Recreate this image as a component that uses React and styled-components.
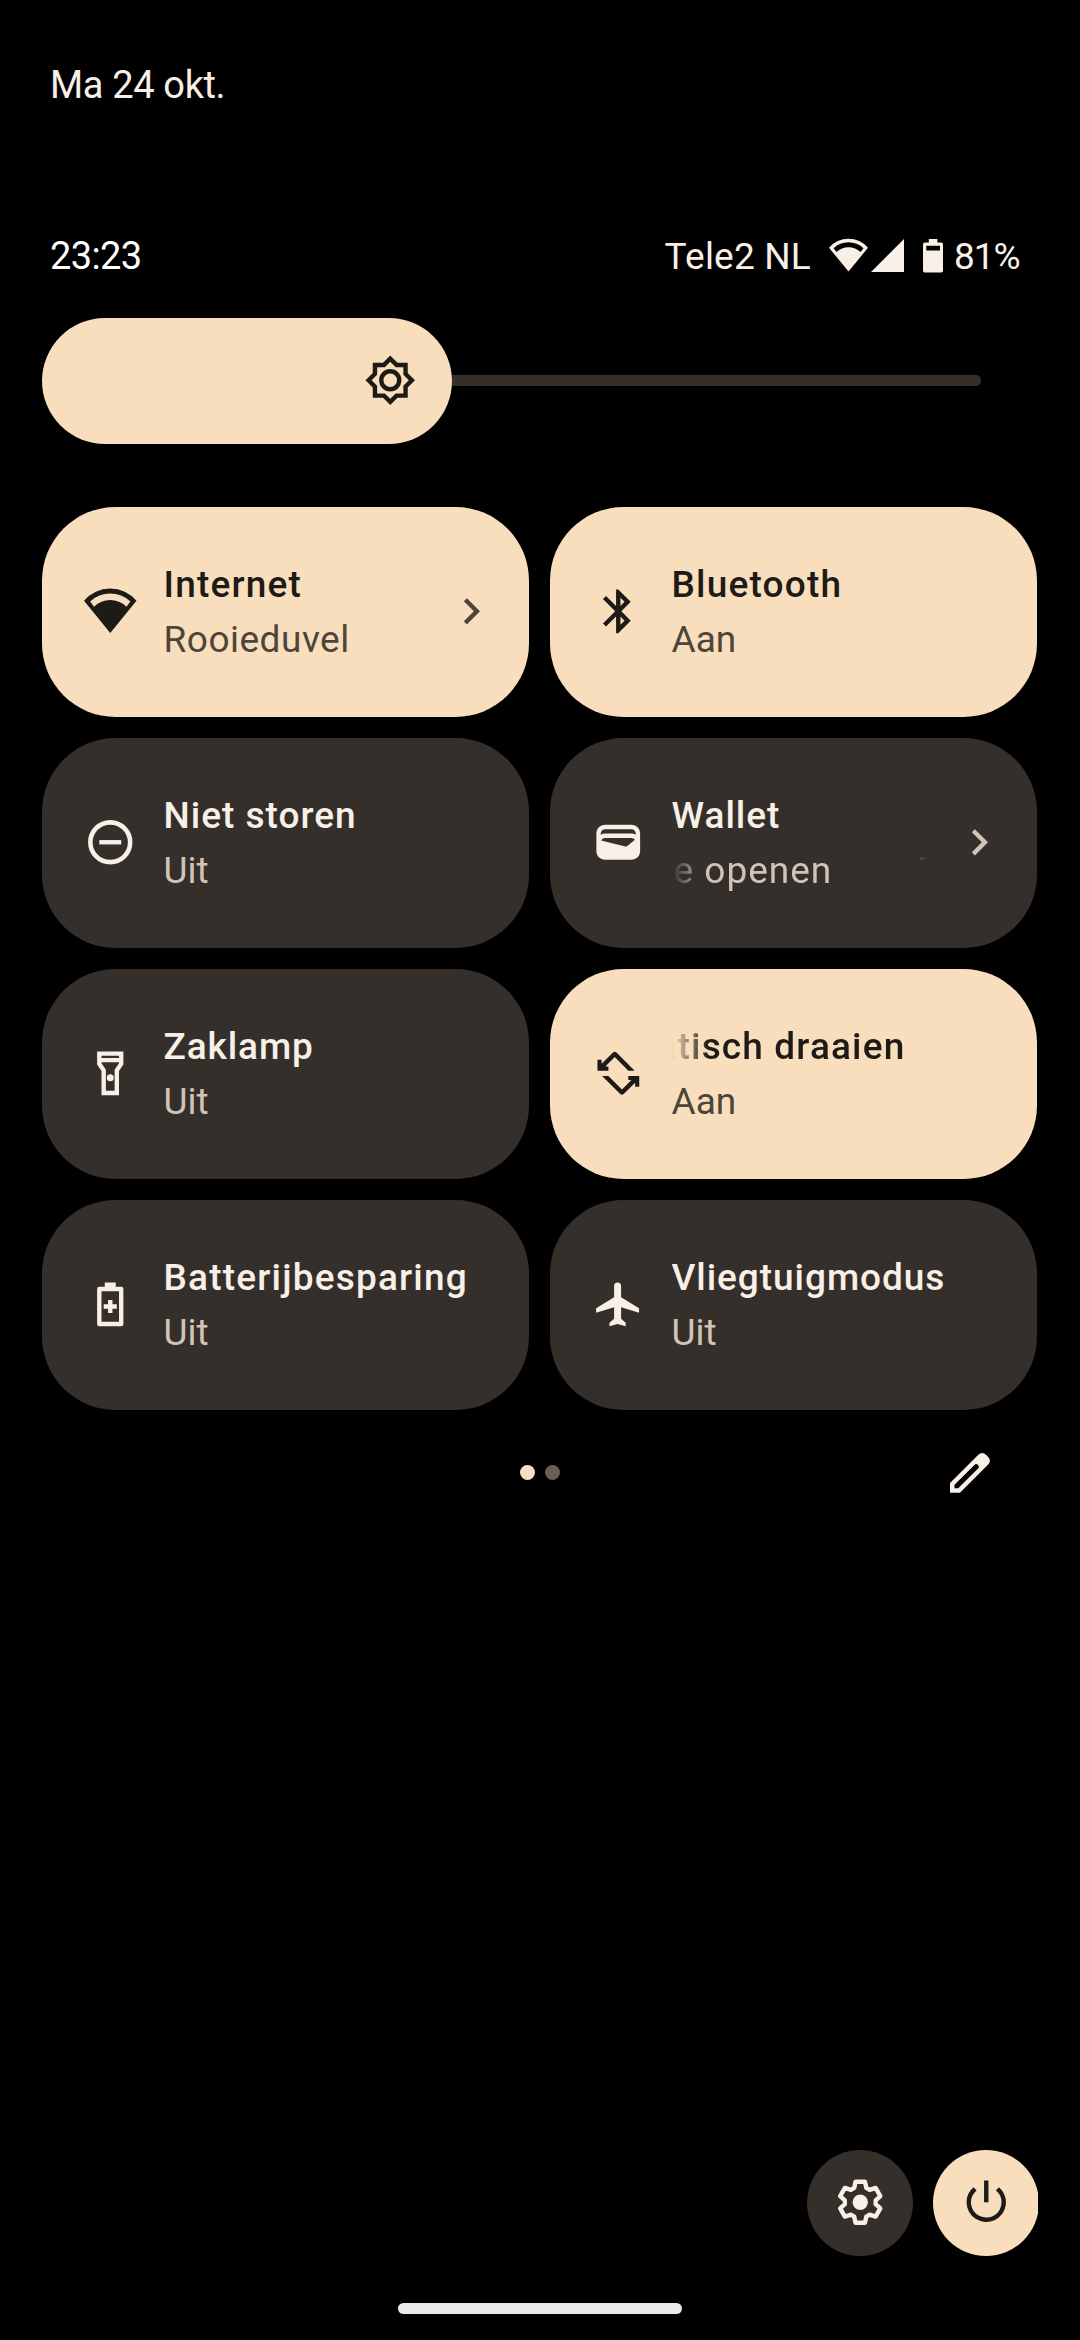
import React, { useState } from "react";
import styled, { createGlobalStyle } from "styled-components";

const ICONS = {
  wifi: (
    <path
      fillRule="evenodd"
      d="M0 7.2A15.7 15.7 0 0 1 24 7.2L12 21.9zM2.8 7.5L4.6 9.9A10.6 10.6 0 0 1 19.4 9.9L21.2 7.5A13.5 13.5 0 0 0 2.8 7.5z"
    />
  ),
  bluetooth: (
    <path d="M17.71 7.71L12 2h-1v7.59L6.41 5 5 6.41 10.59 12 5 17.59 6.41 19 11 14.41V22h1l5.71-5.71-4.3-4.29 4.3-4.29zM13 5.83l1.88 1.88L13 9.59V5.83zm1.88 10.46L13 18.17v-3.76l1.88 1.88z" />
  ),
  dnd: (
    <>
      <circle cx="12" cy="12" r="9.1" fill="none" stroke="currentColor" strokeWidth="2.1" />
      <rect x="7" y="11" width="10" height="2" />
    </>
  ),
  wallet: (
    <path
      fillRule="evenodd"
      d="M18 4H6C3.79 4 2 5.79 2 8v8c0 2.21 1.79 4 4 4h12c2.21 0 4-1.79 4-4V8c0-2.21-1.79-4-4-4zm-1.86 9.77c-.24.2-.57.28-.88.2L4.15 11.25C4.45 10.52 5.16 10 6 10h12c.67 0 1.26.34 1.63.84l-3.49 2.93zM6 6h12c1.1 0 2 .9 2 2v.55C19.41 8.21 18.73 8 18 8H6c-.73 0-1.41.21-2 .55V8c0-1.1.9-2 2-2z"
    />
  ),
  torch: (
    <>
      <path fillRule="evenodd" d="M6 2v6l2 3v11h8V11l2-3V2H6zm10 2v1H8V4h8zm-2 6.4V20h-4v-9.6L8 7.4V7h8v.4l-2 3z" />
      <circle cx="12" cy="14" r="1.6" />
    </>
  ),
  rotate: (
    <>
      <path d="M2.5 5.8h1.9v1.9L9.6 2.5q.8-.7 1.6 0L19.5 10.8h-2.9L10.4 4.6 6.1 8.9h1.4v1.9h-5z" />
      <path
        transform="rotate(180 12.05 12)"
        d="M2.5 5.8h1.9v1.9L9.6 2.5q.8-.7 1.6 0L19.5 10.8h-2.9L10.4 4.6 6.1 8.9h1.4v1.9h-5z"
      />
    </>
  ),
  saver: (
    <>
      <path
        fillRule="evenodd"
        d="M9.5 2h5v2H17q1 0 1 1v16q0 1-1 1H7q-1 0-1-1V5q0-1 1-1h2.5zM8 6v14h8V6z"
      />
      <path d="M11 10h2v2h2v2h-2v2h-2v-2H9v-2h2z" />
    </>
  ),
  plane: (
    <path d="M21.5 15.9v-2.1l-8.2-5V3.6a1.6 1.6 0 0 0-3.2 0v5.2l-8.2 5v2.1l8.2-2.5v5.2L8 20.5V22l3.7-1 3.7 1v-1.5l-2.1-1.9v-5.2z" />
  ),
  chevron: <path d="M8.59 16.59L13.17 12 8.59 7.41 10 6l6 6-6 6z" />,
  brightness: (
    <>
      <path
        fillRule="evenodd"
        d="M20 8.69V4h-4.69L12 .69 8.69 4H4v4.69L.69 12 4 15.31V20h4.69L12 23.31 15.31 20H20v-4.69L23.31 12 20 8.69zm-2 5.79V18h-3.52L12 20.48 9.52 18H6v-3.52L3.52 12 6 9.52V6h3.52L12 3.52 14.48 6H18v3.52L20.48 12 18 14.48z"
      />
      <circle cx="12" cy="12" r="4.1" fill="none" stroke="currentColor" strokeWidth="2" />
    </>
  ),
  power: (
    <path d="M11 2h2v10h-2zM17.83 5.17l-1.42 1.42A6.92 6.92 0 0 1 19 12a7 7 0 1 1-11.41-5.42L6.17 5.17A8.96 8.96 0 0 0 3 12a9 9 0 1 0 14.83-6.83z" />
  ),
};

// six teeth, two outer and two inner corners each
const gearPoints = [0, 60, 120, 180, 240, 300]
  .flatMap((tooth) => [
    [tooth - 23, 7.1],
    [tooth - 13, 9.6],
    [tooth + 13, 9.6],
    [tooth + 23, 7.1],
  ])
  .map(([deg, r]) => {
    const a = (deg * Math.PI) / 180;
    return `${(12 + r * Math.sin(a)).toFixed(2)},${(12 - r * Math.cos(a)).toFixed(2)}`;
  })
  .join(" ");

const Icon = ({ name, size = 52.5 }) => (
  <Svg viewBox="0 0 24 24" $size={size}>
    {ICONS[name]}
  </Svg>
);

const TILES = [
  { id: "internet", icon: "wifi", title: "Internet", state: "Rooieduvel", on: true, more: true, titleGap: 1.2, stateGap: 0.5 },
  { id: "bluetooth", icon: "bluetooth", title: "Bluetooth", state: "Aan", on: true, titleGap: 1.2 },
  { id: "dnd", icon: "dnd", title: "Niet storen", state: "Uit" },
  { id: "wallet", icon: "wallet", title: "Wallet", state: "e openen", next: "T", more: true, stateGap: 1 },
  { id: "torch", icon: "torch", title: "Zaklamp", state: "Uit", titleGap: 0.9 },
  { id: "rotate", icon: "rotate", title: "atisch draaien", state: "Aan", on: true, scrolled: true, titleGap: 1.15 },
  { id: "saver", icon: "saver", title: "Batterijbesparing", state: "Uit", titleGap: 1.2 },
  { id: "plane", icon: "plane", title: "Vliegtuigmodus", state: "Uit", titleGap: 0.95 },
];

const App = () => {
  const [active, setActive] = useState(TILES.filter((t) => t.on).map((t) => t.id));

  const toggle = (id) => {
    setActive(active.includes(id) ? active.filter((a) => a !== id) : [...active, id]);
  };

  return (
    <>
      <GlobalStyle />
      <Screen>
        <DateText>Ma 24 okt.</DateText>

        <StatusBar>
          <Clock>23:23</Clock>
          <Carrier>Tele2 NL</Carrier>
          <Icon name="wifi" size={39} />
          <SignalIcon viewBox="0 0 33 33">
            <path d="M33 0V33H0z" />
          </SignalIcon>
          <BatteryIcon viewBox="0 0 20 34">
            <path
              fillRule="evenodd"
              d="M5.8 0h8.6v3.5h3.8q1.8 0 1.8 1.8v26.4q0 1.8-1.8 1.8H1.8Q0 33.5 0 31.7V5.3Q0 3.5 1.8 3.5h4zM3.3 6.8v4.7h13.7V6.8z"
            />
          </BatteryIcon>
          <Percent>81%</Percent>
        </StatusBar>

        <Slider>
          <Thumb>
            <Icon name="brightness" />
          </Thumb>
          <Track />
        </Slider>

        <Grid>
          {TILES.map((tile) => {
            const on = active.includes(tile.id);
            return (
              <Tile key={tile.id} $on={on} onClick={() => toggle(tile.id)}>
                <Icon name={tile.icon} />
                <Labels>
                  <Title $scrolled={tile.scrolled} $gap={tile.titleGap}>
                    {tile.title}
                  </Title>
                  <State $on={on} $scrolled={!!tile.next} $gap={tile.stateGap}>
                    <span>{tile.state}</span>
                    {tile.next && <NextCopy>{tile.next}</NextCopy>}
                  </State>
                </Labels>
                {tile.more && (
                  <More $on={on}>
                    <Icon name="chevron" />
                  </More>
                )}
              </Tile>
            );
          })}
        </Grid>

        <Pager>
          <Dots>
            <Dot $current />
            <Dot />
          </Dots>
          <PencilIcon viewBox="0 0 40 40">
            <path
              fillRule="evenodd"
              d="M0 30L28.3 1.7Q32.3-1.7 36.3 2L38 3.7Q41.7 7.7 38.2 11.6L10 39.8H0zM4.5 31.8V35.3H8.2L28.8 14.7Q29.2 13 27.5 11.5Q26.2 10.5 25.2 11.2z"
            />
          </PencilIcon>
        </Pager>

        <Footer>
          <RoundButton>
            <Svg viewBox="0 0 24 24" $size={52.5}>
              <polygon
                points={gearPoints}
                fill="none"
                stroke="currentColor"
                strokeWidth="2"
                strokeLinejoin="round"
              />
              <circle cx="12" cy="12" r="3.5" />
            </Svg>
          </RoundButton>
          <RoundButton $on>
            <Icon name="power" />
          </RoundButton>
        </Footer>
        <HomeBar />
      </Screen>
    </>
  );
};

const GlobalStyle = createGlobalStyle`
  * {
    box-sizing: border-box;
  }

  body {
    margin: 0;
    background: #000;
    font-family: Roboto, "Liberation Sans", sans-serif;
  }
`;

const Screen = styled.div`
  width: 1080px;
  height: 2340px;
  padding: 58px 42px 26px;
  display: flex;
  flex-direction: column;
  background: #000;
  color: #f8efe7;
  font-size: 37px;
  line-height: 55px;
  white-space: nowrap;
  overflow: hidden;
`;

const Svg = styled.svg`
  display: block;
  flex: none;
  width: ${(props) => props.$size}px;
  height: ${(props) => props.$size}px;
  margin-bottom: 1px;
  fill: currentColor;
`;

const DateText = styled.div`
  height: 56px;
  padding-left: 8px;
  font-size: 38px;
  letter-spacing: -0.35px;
`;

const StatusBar = styled.div`
  height: 56px;
  margin-top: 114px;
  padding: 0 17px 0 8px;
  display: flex;
  align-items: center;
`;

const Clock = styled.div`
  flex: 1;
  color: #fff;
  font-size: 38px;
  letter-spacing: -0.6px;
`;

const Carrier = styled.div`
  margin-right: 18px;
  letter-spacing: 0.2px;
`;

const SignalIcon = styled.svg`
  width: 33px;
  height: 33px;
  margin: 0 0 1px 3px;
  fill: currentColor;
`;

const BatteryIcon = styled.svg`
  width: 20px;
  height: 34px;
  margin-left: 19px;
  fill: currentColor;
`;

const Percent = styled.div`
  width: 67px;
  margin-left: 11px;
  letter-spacing: -1.1px;
`;

const Slider = styled.div`
  height: 126px;
  margin-top: 34px;
  padding-right: 57px;
  display: flex;
  align-items: center;
`;

const Thumb = styled.div`
  width: 410px;
  height: 126px;
  padding-right: 36px;
  display: flex;
  align-items: center;
  justify-content: flex-end;
  border-radius: 63px;
  background: #f8debd;
  color: #1e1b16;
`;

const Track = styled.div`
  flex: 1;
  height: 11px;
  margin-bottom: 1px;
  border-radius: 0 5px 5px 0;
  background: #352f2b;
`;

const Grid = styled.div`
  margin-top: 63px;
  display: grid;
  grid-template-columns: 487px 487px;
  grid-auto-rows: 210px;
  gap: 21px;
`;

const Tile = styled.div`
  padding: 0 32px 0 42px;
  display: flex;
  align-items: center;
  border-radius: 73.5px;
  background: ${(props) => (props.$on ? "#f8debd" : "#352f2b")};
  color: ${(props) => (props.$on ? "#1e1b16" : "#f8efe7")};
  cursor: pointer;
`;

const Labels = styled.div`
  flex: 1;
  min-width: 0;
  margin-left: 27px;
`;

const Title = styled.div`
  font-weight: 500;
  letter-spacing: ${(props) => props.$gap || 1}px;
  overflow: hidden;
  ${(props) =>
    props.$scrolled &&
    `
    text-indent: -15px;
    mask-image: linear-gradient(to right, transparent, #000 36px);
  `}
`;

const State = styled.div`
  display: flex;
  justify-content: space-between;
  overflow: hidden;
  letter-spacing: ${(props) => props.$gap || 0}px;
  color: ${(props) => (props.$on ? "#4e453a" : "#d1c4b6")};
  ${(props) =>
    props.$scrolled &&
    `
    padding-left: 2px;
    mask-image: linear-gradient(
      to right,
      transparent,
      #000 33px,
      #000 calc(100% - 33px),
      transparent
    );
  `}
`;

// start of the second marquee copy, just entering on the right
const NextCopy = styled.span`
  flex: 0 0 7px;
  width: 7px;
`;

const More = styled.div`
  margin-left: 26px;
  color: ${(props) => (props.$on ? "#4e453a" : "#d1c4b6")};
`;

const Pager = styled.div`
  height: 53px;
  margin-top: 36px;
  padding: 0 48px;
  display: grid;
  grid-template-columns: 1fr auto 1fr;
  align-items: center;
`;

const Dots = styled.div`
  grid-column: 2;
  display: flex;
  gap: 10px;
`;

const Dot = styled.span`
  width: 15px;
  height: 15px;
  border-radius: 50%;
  background: ${(props) => (props.$current ? "#f8debd" : "#6c5f50")};
`;

const PencilIcon = styled.svg`
  justify-self: end;
  width: 40px;
  height: 40px;
  fill: currentColor;
`;

const Footer = styled.div`
  margin-top: auto;
  display: flex;
  justify-content: flex-end;
  gap: 20px;
  overflow: hidden;
`;

const RoundButton = styled.div`
  flex: none;
  width: 106px;
  height: 106px;
  display: flex;
  align-items: center;
  justify-content: center;
  border-radius: 50%;
  background: ${(props) => (props.$on ? "#f8debd" : "#352f2b")};
  color: ${(props) => (props.$on ? "#1e1b16" : "#f8efe7")};

  &:last-child {
    margin-right: -1px;
  }
`;

const HomeBar = styled.div`
  width: 284px;
  height: 11px;
  margin: 47px auto 0;
  border-radius: 5.5px;
  background: #eaeaea;
`;

export default App;
